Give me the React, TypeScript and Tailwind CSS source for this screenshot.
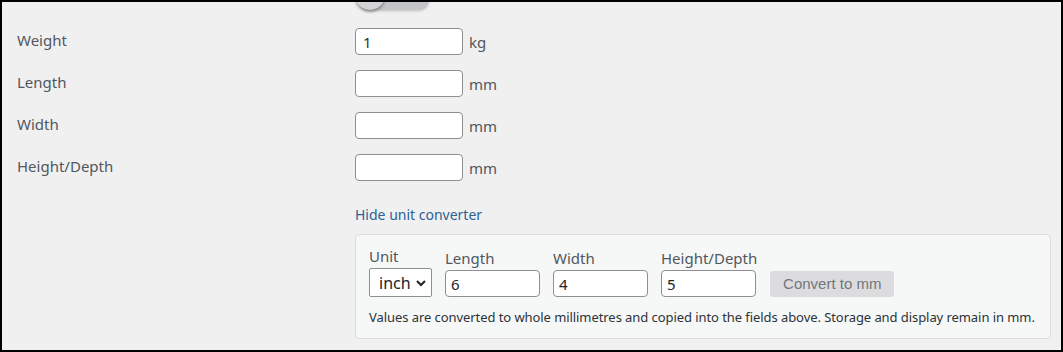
import React from "react";

const fields = [
  { label: "Weight", value: "1", unit: "kg" },
  { label: "Length", value: "", unit: "mm" },
  { label: "Width", value: "", unit: "mm" },
  { label: "Height/Depth", value: "", unit: "mm" },
];

const convFields = [
  { label: "Length", value: "6" },
  { label: "Width", value: "4" },
  { label: "Height/Depth", value: "5" },
];

const App = () => {
  return (
    <div
      className="w-[1063px] h-[352px] overflow-hidden border-2 border-black bg-[#f0f0f1] text-[#50575e]"
      style={{ fontFamily: '"Noto Sans", "Open Sans", sans-serif' }}
    >
      {/* toggle cut off at top */}
      <div className="relative h-[10px] ml-[353px]">
        <div className="absolute -top-[12px] left-[4px] w-[70px] h-[20px] rounded-full bg-[#c3c4c7] shadow-[0_1px_3px_rgba(0,0,0,0.2)]" />
        <div className="absolute -top-[22px] left-0 w-[30px] h-[30px] rounded-full bg-[#d4d4d6] shadow-[0_2px_3px_rgba(0,0,0,0.35)]" />
      </div>

      <div className="flex flex-col gap-[15px] mt-[16px]">
        {fields.map((f) => (
          <div key={f.label} className="flex items-start">
            <div className="w-[353px] pl-[15px] text-[15px] leading-[24px]">
              {f.label}
            </div>
            <input
              defaultValue={f.value}
              className="w-[108px] h-[27px] rounded-[4px] border border-[#8c8f94] bg-white px-[7px] text-[15px] text-[#2c3338] outline-none"
            />
            <span className="ml-[6px] mt-[4px] text-[15px] leading-[20px]">
              {f.unit}
            </span>
          </div>
        ))}
      </div>

      <div className="ml-[353px] mt-[21px]">
        <a className="text-[14px] leading-[20px] text-[#2b6296] cursor-pointer">
          Hide unit converter
        </a>
        <div className="mt-[8px] w-[696px] rounded-[4px] border border-[#dcdcde] bg-[#f6f7f7] px-[13px] pt-[12px] pb-[12px]">
          <div className="flex items-end gap-[13px]">
            <div className="flex flex-col">
              <span className="text-[15px] leading-[18px] mb-[3px]">Unit</span>
              <div className="flex items-center justify-between w-[63px] h-[29px] border border-[#8c8f94] rounded-[2px] bg-white pl-[9px] pr-[4px] text-[16px] text-[#1d2327]">
                <span>inch</span>
                <svg width="12" height="12" viewBox="0 0 12 12">
                  <path d="M2 4l4 4 4-4" fill="none" stroke="#1d2327" strokeWidth="2" />
                </svg>
              </div>
            </div>
            {convFields.map((c) => (
              <div key={c.label} className="flex flex-col">
                <span className="text-[15px] leading-[18px] mb-[3px]">
                  {c.label}
                </span>
                <input
                  defaultValue={c.value}
                  className="w-[95px] h-[27px] rounded-[4px] border border-[#8c8f94] bg-white px-[5px] text-[15px] text-[#1d2327] outline-none"
                />
              </div>
            ))}
            <button
              className="w-[124px] h-[26px] rounded-[3px] bg-[#dcdcde] text-[15px] text-[#72777c]"
              style={{ fontFamily: '"Liberation Sans", Arial, sans-serif' }}
            >
              Convert to mm
            </button>
          </div>
          <p className="mt-[11px] whitespace-nowrap text-[13px] leading-[18px] tracking-[-0.07px] text-[#2c3338]">
            Values are converted to whole millimetres and copied into the
            fields above. Storage and display remain in mm.
          </p>
        </div>
      </div>
    </div>
  );
};

export default App;
